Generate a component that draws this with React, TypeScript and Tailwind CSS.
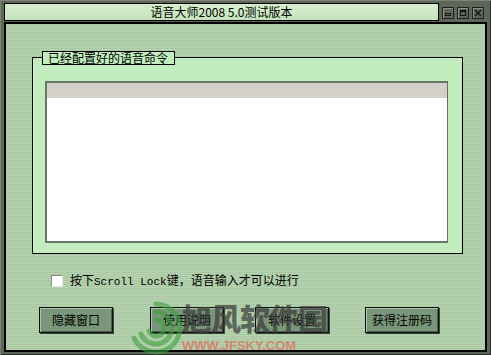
import React from "react";

const cjk = "font-['SimSun','Noto_Sans_CJK_SC',sans-serif]";

function TitleButton({ kind }: { kind: "min" | "max" | "close" }) {
  return (
    <div className="flex h-[12px] w-[12px] items-center justify-center border border-[#1e221c] bg-[#5e665a] shadow-[inset_1px_1px_0_#8a9486]">
      {kind === "min" && <div className="mt-[3px] h-[3px] w-[6px] border border-[#111]" />}
      {kind === "max" && <div className="h-[6px] w-[6px] border border-[#111] border-t-2" />}
      {kind === "close" && (
        <svg width="8" height="8" viewBox="0 0 8 8">
          <path d="M1 1L7 7M7 1L1 7" stroke="#111" strokeWidth="1.2" />
        </svg>
      )}
    </div>
  );
}

function Btn({ label, className }: { label: string; className: string }) {
  return (
    <button
      type="button"
      className={`flex h-[26px] w-[74px] items-center justify-center border border-[#0e120e] bg-[#7a967a] text-[12px] text-black shadow-[inset_1px_1px_0_#a9c2a9,inset_-1px_-1px_0_#4c5e4c,1px_1px_0_#3c463c] ${cjk} ${className}`}
    >
      {label}
    </button>
  );
}

export default function App() {
  return (
    <div className="relative flex h-[355px] w-[491px] flex-col overflow-hidden bg-[#5e665a] px-[4px] pt-[3px] pb-[3px] shadow-[inset_1px_1px_0_#7c8478,inset_-1px_-1px_0_#2a2e28]">
      {/* title row */}
      <div className="flex h-[19px] items-start">
        <div
          className={`flex h-[18px] w-[435px] items-center justify-center border border-black bg-[linear-gradient(180deg,#d6efcf,#c3e3bb)] text-[12px] leading-none text-black ${cjk}`}
        >
          语音大师2008 5.0测试版本
        </div>
        <div className="ml-[3px] mt-[4px] flex gap-[3px]">
          <TitleButton kind="min" />
          <TitleButton kind="max" />
          <TitleButton kind="close" />
        </div>
      </div>

      {/* body */}
      <div className="flex flex-1 flex-col border-2 border-black bg-[repeating-linear-gradient(180deg,#aac8a3_0px,#aac8a3_1px,#b6d3af_1px,#b6d3af_2px)]">
        {/* group box */}
        <div className="relative ml-[26px] mt-[33px] h-[197px] w-[431px] border border-black bg-[#c1edbf]">
          <div
            className={`absolute left-[9px] top-[-7px] flex h-[14px] w-[133px] items-center border border-black bg-[#c1edbf] pl-[5px] text-[12px] leading-none text-black ${cjk}`}
          >
            已经配置好的语音命令
          </div>
          <div className="ml-[12px] mt-[23px] flex h-[162px] w-[403px] flex-col border-t-2 border-l-2 border-b-2 border-[#687868] border-r border-r-[#6a6a6a] border-r-dotted bg-white">
            <div className="h-[15px] bg-[#d4d0c8]" />
          </div>
        </div>

        {/* checkbox row */}
        <div className="ml-[45px] mt-[20px] flex items-center">
          <div className="h-[12px] w-[12px] border border-t-[#8a8a8a] border-l-[#8a8a8a] border-r-[#e8e8e8] border-b-[#e8e8e8] bg-white" />
          <span className={`ml-[7px] text-[12px] leading-none text-black ${cjk}`}>
            按下<span className="font-['Liberation_Mono',monospace] text-[11px]">Scroll Lock</span>键，语音输入才可以进行
          </span>
        </div>

        {/* buttons */}
        <div className="mt-[19px] flex">
          <Btn label="隐藏窗口" className="ml-[33px]" />
          <Btn label="使用说明" className="ml-[37px]" />
          <Btn label="软件设置" className="ml-[31px]" />
          <Btn label="获得注册码" className="ml-[36px]" />
        </div>
      </div>

      {/* watermark */}
      <div className="pointer-events-none absolute left-[126px] top-[298px] opacity-60">
        <svg width="60" height="60" viewBox="0 0 60 60">
          <g fill="none" stroke="#3fa03f" strokeWidth="5" strokeLinecap="round">
            <path d="M30 6 A24 24 0 1 1 8 40" />
            <path d="M30 14 A16 16 0 1 1 15 36" />
            <path d="M30 22 A8 8 0 1 1 23 33" />
          </g>
        </svg>
      </div>
      <div
        className={`pointer-events-none absolute left-[182px] top-[302px] text-[30px] font-black leading-none tracking-[-1px] text-[#3a3a3a] opacity-70 ${cjk}`}
      >
        旭风软件园
      </div>
      <div className="pointer-events-none absolute left-[182px] top-[339px] font-['Liberation_Sans',sans-serif] text-[13px] font-bold leading-none text-[#e06a5a] opacity-70">
        WWW.JFSKY.COM
      </div>
    </div>
  );
}
